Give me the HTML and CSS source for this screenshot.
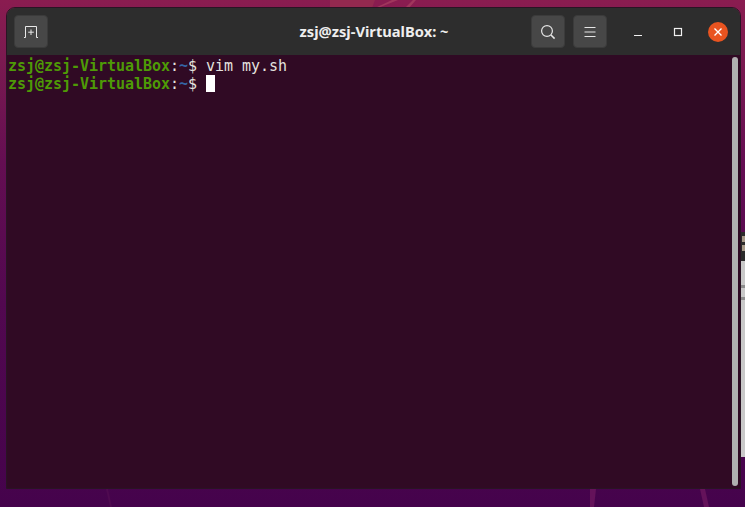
FILE: index.html
```html
<!DOCTYPE html>
<html lang="en">
<head>
<meta charset="utf-8">
<title>zsj@zsj-VirtualBox: ~</title>
<link rel="stylesheet" href="styles.css">
</head>
<body>
<div class="desktop">
  <svg class="wallpaper" width="745" height="507" viewBox="0 0 745 507" aria-hidden="true">
    <path class="streak" d="M330 0H375L372 8H330Z"/>
    <path class="streak-thin" d="M375 8L392 0H398L378 8Z"/>
    <path class="streak-thin" d="M405 8L413 0H416L409 8Z"/>
    <path class="streak-low" d="M590 489H596L594 507H590Z"/>
    <path class="streak-low" d="M700 489H705L709 507H704Z"/>
    <path class="streak-faint" d="M108 489L112 507H110L106 489Z"/>
  </svg>
  <div class="side-window">
    <div class="side-top"><span class="side-icon"></span><span class="side-icon"></span></div>
    <div class="side-body"><span class="side-mark"></span><span class="side-mark"></span></div>
  </div>
  <main class="window">
    <header class="titlebar">
      <button class="tool-btn new-tab" aria-label="New tab">
        <svg width="16" height="14" viewBox="0 0 16 14"><path d="M1 12.5H2.5V1.5H13.5V12.5H15" fill="none" stroke="#e8e8e8" stroke-width="1"/><path d="M8 4.5V10M5.2 7.2H10.8" fill="none" stroke="#e8e8e8" stroke-width="1"/></svg>
      </button>
      <h1 class="title">zsj@zsj-VirtualBox: ~</h1>
      <div class="tools">
        <button class="tool-btn" aria-label="Search">
          <svg width="16" height="16" viewBox="0 0 16 16"><circle cx="7" cy="7" r="5.4" fill="none" stroke="#e6e6e6" stroke-width="1.2"/><path d="M11 11L14.6 14.6" stroke="#e6e6e6" stroke-width="1.5"/></svg>
        </button>
        <button class="tool-btn" aria-label="Menu">
          <svg width="12" height="12" viewBox="0 0 12 12"><path d="M0.5 1.5H11.5M0.5 6H11.5M0.5 10.5H11.5" stroke="#e6e6e6" stroke-width="1"/></svg>
        </button>
      </div>
      <div class="controls">
        <span class="control"><svg width="10" height="10" viewBox="0 0 10 10"><path d="M1 8.5H9" stroke="#f0f0f0" stroke-width="1.2"/></svg></span>
        <span class="control"><svg width="10" height="10" viewBox="0 0 10 10"><rect x="1.5" y="1.5" width="7" height="7" fill="none" stroke="#f0f0f0" stroke-width="1.2"/></svg></span>
        <span class="control close"><svg width="10" height="10" viewBox="0 0 10 10"><path d="M1.5 1.5L8.5 8.5M8.5 1.5L1.5 8.5" stroke="#fff" stroke-width="1.4"/></svg></span>
      </div>
    </header>
    <section class="terminal">
      <div class="line"><span class="user">zsj@zsj-VirtualBox</span>:<span class="path">~</span>$ vim my.sh</div>
      <div class="line"><span class="user">zsj@zsj-VirtualBox</span>:<span class="path">~</span>$ <span class="cursor"></span></div>
      <div class="scrollbar"></div>
    </section>
  </main>
</div>
</body>
</html>
```
FILE: styles.css
```css
* { box-sizing: border-box; }
html, body { margin: 0; padding: 0; }
body { width: 745px; height: 507px; overflow: hidden; }

.desktop {
  position: relative;
  width: 745px;
  height: 507px;
  padding: 7px 4px 18px 6px;
  background: linear-gradient(180deg, #8a1c50 0%, #7a1a50 12%, #640e52 32%, #520850 60%, #45034c 100%);
}

.wallpaper { position: absolute; left: 0; top: 0; }
.streak { fill: #93294f; }
.streak-thin { fill: #a0365c; }
.streak-low { fill: #64125a; }
.streak-faint { fill: #4f0a50; }

.side-window {
  position: absolute;
  left: 741px;
  top: 232px;
  width: 4px;
  height: 225px;
  display: flex;
  flex-direction: column;
}
.side-top {
  height: 29px;
  padding-top: 4px;
  display: flex;
  flex-direction: column;
  gap: 3px;
  background: #2b2b2b;
}
.side-icon { width: 3px; height: 6px; margin-left: 1px; background: #a89a88; }
.side-body {
  flex: 1;
  padding-top: 24px;
  display: flex;
  flex-direction: column;
  gap: 9px;
  background: #c9c9c9;
}
.side-mark { height: 3px; background: #8e8e8e; }

.window {
  position: relative;
  width: 735px;
  height: 482px;
  display: flex;
  flex-direction: column;
  border-radius: 9px 9px 0 0;
  border: 1px solid #2a1424;
  overflow: hidden;
}

.titlebar {
  position: relative;
  flex: none;
  height: 47px;
  display: flex;
  align-items: center;
  padding: 0 12px 0 7px;
  background: #2d2d2d;
}

.tool-btn {
  width: 34px;
  height: 33px;
  padding: 0;
  display: flex;
  align-items: center;
  justify-content: center;
  background: #474747;
  border: 1px solid #3b3b3b;
  border-radius: 4px;
}

.title {
  position: absolute;
  left: 1px;
  right: 0;
  top: 14px;
  margin: 0;
  text-align: center;
  font: 700 14.7px/18px "Noto Sans", "Open Sans", sans-serif;
  color: #eeeeee;
}

.tools {
  margin-left: auto;
  display: flex;
  gap: 8px;
}

.controls {
  display: flex;
  align-items: center;
  margin-left: 21px;
  gap: 20px;
}
.control {
  width: 20px;
  height: 20px;
  display: flex;
  align-items: center;
  justify-content: center;
}
.close {
  border-radius: 50%;
  background: #e95420;
}

.terminal {
  position: relative;
  flex: 1;
  padding: 2px 0 0 1px;
  background: #300a24;
  font: 400 15px/18px "DejaVu Sans Mono", monospace;
  letter-spacing: -0.03px;
  color: #e4e2df;
}
.line { height: 18px; white-space: pre; }
.user { color: #4e9a06; font-weight: 700; }
.path { color: #3465a4; font-weight: 700; }
.cursor {
  display: inline-block;
  width: 9px;
  height: 17px;
  vertical-align: -3px;
  background: #ffffff;
}

.scrollbar {
  position: absolute;
  right: 2px;
  top: 2px;
  bottom: 2px;
  width: 6px;
  background: #b0b0b0;
  border-radius: 3px;
}
```
